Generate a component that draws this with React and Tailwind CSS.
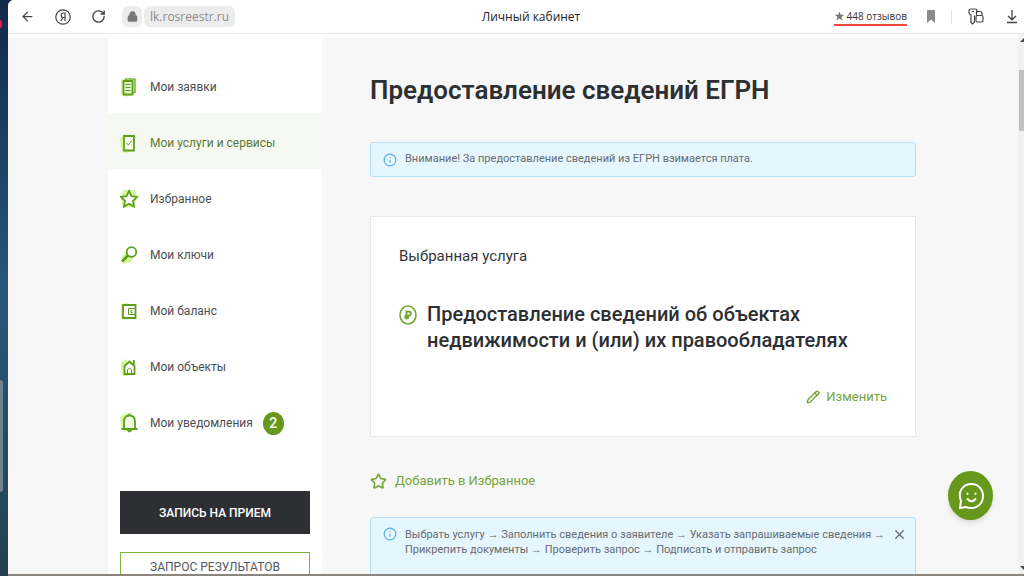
import { ArrowLeft, Info, Lock, Pencil, RotateCw, Star, X } from "lucide-react";

const svgProps = {
  viewBox: "0 0 20 22",
  fill: "none",
  stroke: "#5f9e1c",
  strokeWidth: 1.8,
  className: "h-[22px] w-5",
};

const ListIcon = () => (
  <svg {...svgProps}>
    <path d="M1 6.5Q1 2 5 3L10 1.5L15 3V15Q13 20 7 20.5Q0 20 1 14Z" fill="#d5f79b" stroke="none" />
    <path d="M3.5 5H12.500V18.500H3.500Z" fill="#e4f3cf" />
    <path d="M5.500 4.500V3H15V16.500H13" strokeWidth="1.200" />
    <path d="M5.500 8.500H10.500M5.500 11.500H10.500M5.500 14.500H10.500" strokeWidth="1" />
  </svg>
);

const ServicesIcon = () => (
  <svg {...svgProps}>
    <path d="M0 6L4 3H10V20L4 21L1 17Z" fill="#d5f79b" stroke="none" />
    <path d="M4 4H14V18.500H4Z" fill="#f6fdec" />
    <path d="M6.500 11L8.300 13L11.500 9" strokeWidth="1" />
  </svg>
);

const StarIcon = () => (
  <svg {...svgProps}>
    <path d="M3 2H15L17 10L14 19L3 20L1 10Z" fill="#d5f79b" stroke="none" />
    <path
      d="M9 3L11.500 8.200L17 8.900L13 12.800L14 18.500L9 15.700L4 18.500L5 12.800L1 8.900L6.500 8.200Z"
      fill="white"
    />
  </svg>
);

const KeyIcon = () => (
  <svg {...svgProps}>
    <path d="M1 14L6 8L13 14L11 18L3 20Z" fill="#d5f79b" stroke="none" />
    <circle cx="11.500" cy="8" r="4.800" fill="white" />
    <path d="M8 11.500L2 17.500" strokeWidth="2.600" />
  </svg>
);

const WalletIcon = () => (
  <svg {...svgProps}>
    <path d="M1 4L8 3V18L4 20L1 18Z" fill="#d5f79b" stroke="none" />
    <path d="M3 5H15.500V18H3Z" fill="white" />
    <path d="M16 8.500H8.500V14.500H16M12.500 10.500H11V12.500H12.500" strokeWidth="1" />
  </svg>
);

const HouseIcon = () => (
  <svg {...svgProps}>
    <path d="M1 6L6 3L8 8L12 18L8 20L3 20L1 14Z" fill="#d5f79b" stroke="none" />
    <path d="M4.500 18V10L9.500 5.500L14.500 10V18Z" fill="white" />
    <path d="M13.800 9V4" />
    <path d="M7.500 18V13.500Q9.500 11 11.500 13.500V18" strokeWidth="1" />
  </svg>
);

const BellIcon = () => (
  <svg {...svgProps}>
    <path d="M0 5L6 1L10 2V17L5 20L1 15Z" fill="#d5f79b" stroke="none" />
    <path d="M4 16.500V9.500Q4 3.500 9.500 3.500Q15 3.500 15 9.500V16.500" fill="#f1fbe3" />
    <path d="M1.500 17H17.500M9.500 3.500V1.500M7.500 17.500Q9.500 21.500 11.500 17.500" />
  </svg>
);

const menu = [
  { label: "Мои заявки", Icon: ListIcon },
  { label: "Мои услуги и сервисы", Icon: ServicesIcon, active: true },
  { label: "Избранное", Icon: StarIcon },
  { label: "Мои ключи", Icon: KeyIcon },
  { label: "Мой баланс", Icon: WalletIcon },
  { label: "Мои объекты", Icon: HouseIcon },
  { label: "Мои уведомления", Icon: BellIcon, count: 2 },
];

function BrowserBar() {
  return (
    <header className="flex h-[34px] shrink-0 items-center border-b border-[#e8e8e8] bg-white pr-1.5 pl-3 font-['Open_Sans',sans-serif] text-[#444]">
      <div className="flex flex-1 items-center">
        <button aria-label="Назад" className="mr-5">
          <ArrowLeft size={15} strokeWidth={2} />
        </button>
        <button aria-label="Яндекс" className="mr-5">
          <svg width="16" height="16" viewBox="0 0 16 16" fill="none" stroke="#444" strokeWidth="1.200">
            <circle cx="8" cy="8" r="7.200" />
            <path d="M10 12V4H8.300C5.500 4 5.500 8.500 8.300 8.500H10M8.200 8.500L5.800 12" />
          </svg>
        </button>
        <button aria-label="Обновить" className="mr-4">
          <RotateCw size={15} strokeWidth={2.2} />
        </button>
        <span className="flex h-[21px] w-5 items-center justify-center rounded-md bg-[#ececec]">
          <Lock size={11} strokeWidth={3} className="fill-[#777] text-[#777]" />
        </span>
        <span className="ml-0.5 flex h-[21px] items-center rounded-md bg-[#ececec] px-1.5 text-xs text-[#8c8c8c]">
          lk.rosreestr.ru
        </span>
      </div>
      <div className="pl-6 text-xs text-[#222]">Личный кабинет</div>
      <div className="flex flex-1 items-center justify-end">
        <a
          href="#reviews"
          className="mr-5 flex items-center gap-0.5 border-b-2 border-[#ef4a3c] text-[10px] leading-4 text-[#333]"
        >
          <svg width="11" height="10" viewBox="0 0 20 20" fill="#777">
            <path d="M10 1L12.500 7.500H19.500L14 12L16 19L10 15L4 19L6 12L0.500 7.500H7.500Z" />
          </svg>
          448 отзывов
        </a>
        <button aria-label="Закладка" className="mr-4">
          <svg width="8" height="13" viewBox="0 0 8 13" fill="#8a8a8a">
            <path d="M0 1Q0 0 1 0H7Q8 0 8 1V13L4 9.500L0 13Z" />
          </svg>
        </button>
        <span className="mr-4 h-3.5 w-px bg-[#e4e4e4]" />
        <button aria-label="Пароли" className="mr-[22px]">
          <svg width="16" height="17" viewBox="0 0 16 17" fill="none" stroke="#444" strokeWidth="1.200">
            <path d="M9 4.500V3Q9 1 7 1H3Q1 1 1 3V4.500Q1 6 3 7V14.500L4.500 16L6.500 14V7.500M4 3.500H6" />
            <path d="M8.500 7.500V3.500H12Q14 3.500 14 5.500V7.500" />
            <rect x="8" y="7.500" width="7" height="6.500" rx="1.500" />
          </svg>
        </button>
        <button aria-label="Загрузки">
          <svg width="12" height="15" viewBox="0 0 12 15" fill="none" stroke="#444" strokeWidth="1.300">
            <path d="M6 1V10.500M2 7L6 10.800L10 7M1 13.500H11" />
          </svg>
        </button>
      </div>
    </header>
  );
}

function Sidebar() {
  return (
    <aside className="w-[214px] shrink-0 bg-white pt-[19px]">
      <nav>
        {menu.map(({ label, Icon, active, count }) => (
          <a
            key={label}
            href="#menu"
            className={`flex h-14 items-center px-3 pt-1 text-xs ${
              active ? "bg-[#f6f9f1] text-[#5c7a35]" : "text-[#4b4f54]"
            }`}
          >
            <Icon />
            <span className="ml-[10px]">{label}</span>
            {count && (
              <span className="ml-2.5 flex h-[23px] w-[21px] items-center justify-center rounded-[50%] bg-[#66991b] text-sm font-medium text-white">
                {count}
              </span>
            )}
          </a>
        ))}
      </nav>
      <div className="mt-[42px] flex flex-col gap-[18px] px-3">
        <button className="h-[43px] bg-[#2d2f32] text-xs font-medium text-white">ЗАПИСЬ НА ПРИЕМ</button>
        <button className="h-[43px] border border-[#7fb23a] pb-3.5 text-xs text-[#55595e]">
          ЗАПРОС РЕЗУЛЬТАТОВ
        </button>
      </div>
    </aside>
  );
}

function Content() {
  return (
    <main className="mr-[102px] ml-12 min-w-0 flex-1">
      <h1 className="pt-8 text-[26px] leading-10 font-semibold text-[#2d3033]">Предоставление сведений ЕГРН</h1>

      <div className="mt-8 flex h-[35px] items-center rounded-[3px] border border-[#b5e0fa] bg-[#e6f6fe] px-3 text-[11px] text-[#666b70]">
        <Info size={14} className="mr-2 shrink-0 text-[#57aeee]" />
        Внимание! За предоставление сведений из ЕГРН взимается плата.
      </div>

      <section className="mt-[39px] h-[221px] border border-[#e9e9e9] bg-white px-7 pt-[27px]">
        <p className="text-[15px] leading-6 text-[#34373a]">Выбранная услуга</p>
        <div className="mt-[33px] flex">
          <svg width="18" height="20" viewBox="0 0 18 20" fill="none" stroke="#74a833" className="mt-1 mr-[10px] shrink-0">
            <ellipse cx="9" cy="10" rx="8" ry="9" strokeWidth="1.600" />
            <path d="M7.500 14.500V6.500H9.700C12.500 6.500 12.500 10.700 9.700 10.700H5.500M5.500 12.700H10" strokeWidth="1.900" />
          </svg>
          <h2 className="text-xl leading-[26px] font-medium text-[#2d3033]">
            Предоставление сведений об объектах
            <br />
            недвижимости и (или) их правообладателях
          </h2>
        </div>
        <div className="mt-8 flex justify-end">
          <button className="flex items-center gap-1.5 text-[13px] leading-6 text-[#76a53a]">
            <Pencil size={14} strokeWidth={2.4} />
            Изменить
          </button>
        </div>
      </section>

      <button className="mt-8 flex items-center gap-2 text-[13px] leading-6 text-[#76a53a]">
        <Star size={17} strokeWidth={2.4} />
        Добавить в Избранное
      </button>

      <div className="mt-6 flex h-24 items-start rounded-[3px] border border-[#b5e0fa] bg-[#e6f6fe] px-3 pt-[9px] text-[11px] leading-[15px] text-[#666b70]">
        <Info size={14} className="mr-2 shrink-0 text-[#57aeee]" />
        <p className="flex-1">
          Выбрать услугу → Заполнить сведения о заявителе → Указать запрашиваемые сведения →
          <br />
          Прикрепить документы → Проверить запрос → Подписать и отправить запрос
        </p>
        <button aria-label="Закрыть" className="-mr-1">
          <X size={15} />
        </button>
      </div>
    </main>
  );
}

function ScrollBar() {
  return (
    <div className="flex w-1.5 shrink-0 flex-col items-end bg-[#f1f1f1]">
      <svg width="4" height="4" viewBox="0 0 4 4" className="mt-1 fill-[#444]">
        <path d="M0 4L4 0V4Z" />
      </svg>
      <div className="mt-7 h-[61px] w-[5px] bg-[#c1c1c1]" />
      <svg width="4" height="4" viewBox="0 0 4 4" className="mt-auto mb-1 fill-[#444]">
        <path d="M0 0H4V4Z" />
      </svg>
    </div>
  );
}

export default function App() {
  return (
    <div className="flex h-screen overflow-hidden bg-[#12284a] font-[Roboto,sans-serif]">
      {/* Desktop strip beside the window */}
      <div className="relative w-2 shrink-0 bg-linear-to-b from-[#12284a] via-[#27587d] to-[#25414f]">
        <span className="absolute top-5 left-0 h-2 w-0.5 rounded-r bg-[#e0203a]" />
        <span className="absolute top-[380px] left-0 h-[112px] w-[3px] rounded-r bg-[#71828f]" />
      </div>
      <div className="relative flex min-w-0 flex-1 flex-col overflow-hidden rounded-tl-md border-b-2 border-[#8b8580] bg-white">
        <BrowserBar />
        <div className="flex min-h-0 flex-1">
          <div className="mt-1 flex min-w-0 flex-1 overflow-hidden bg-[#f7f7f7] pl-[100px]">
            <Sidebar />
            <Content />
          </div>
          <ScrollBar />
        </div>
        <button
          aria-label="Чат"
          className="absolute right-[31px] bottom-[54px] flex h-[49px] w-[45px] items-center justify-center rounded-[50%] bg-[#66991b] shadow-md"
        >
          <svg width="26" height="28" viewBox="0 0 26 28" fill="none" stroke="white" strokeWidth="2" strokeLinecap="round" strokeLinejoin="round">
            <path d="M2 26L3 19C-1 9 5.500 2 13.500 2C20.500 2 25 7.500 25 14C25 21 20 26 13.500 26Q10 26 8 25Z" />
            <path d="M9.500 17Q13.500 21.500 17.500 17M9.500 11.500V12M17.500 11.500V12" />
          </svg>
        </button>
      </div>
    </div>
  );
}
